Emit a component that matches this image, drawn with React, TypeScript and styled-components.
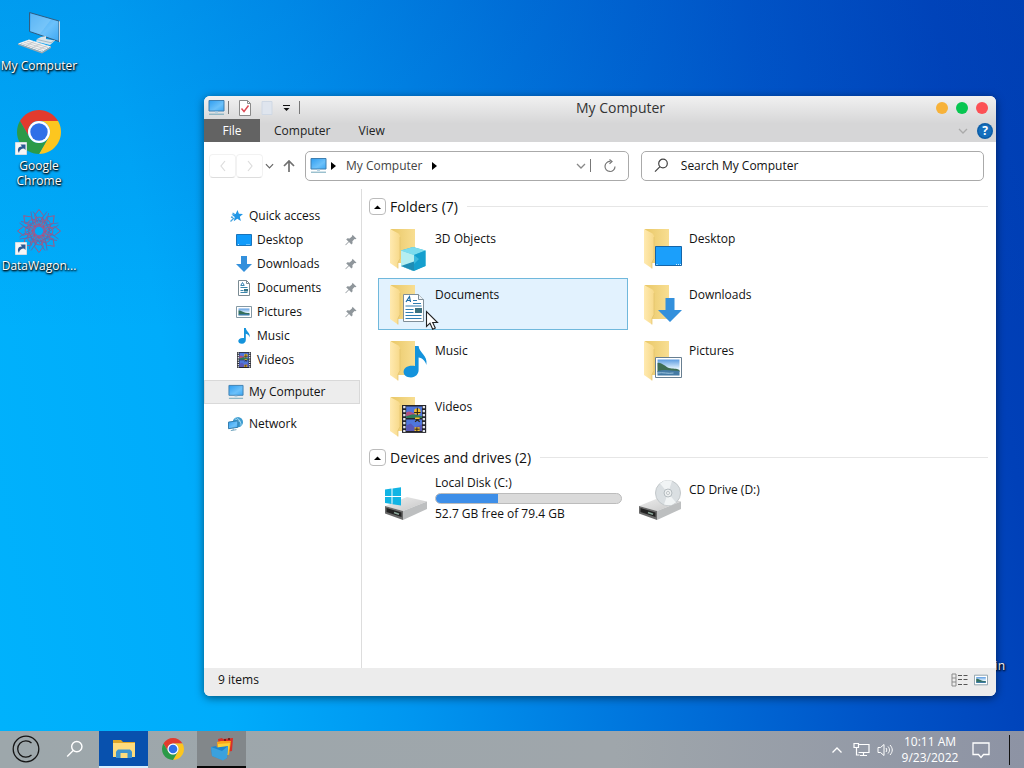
/******************************************************************************/

import { ReactNode } from 'react';
import styled, { createGlobalStyle } from 'styled-components';

/******************************************************************************/

const GlobalStyle = createGlobalStyle`
  * {
    box-sizing: border-box;
  }

  body {
    margin: 0;
    font-family: 'Open Sans', 'Noto Sans', sans-serif;
    font-size: 12px;
    line-height: 16px;
    color: #111;
  }

  button {
    display: flex;
    align-items: center;
    justify-content: center;
    padding: 0;
    border: none;
    background: none;
    color: inherit;
    font: inherit;
  }

  svg {
    display: block;
    flex: none;
  }
`;

/* ---------------------------------- desktop ------------------------------- */

const Screen = styled.div`
  display: flex;
  flex-direction: column;
  height: 100vh;
  overflow: hidden;
`;

const Desktop = styled.main`
  position: relative;
  flex: 1;
  min-height: 0;
  background: linear-gradient(rgba(0, 80, 190, 0.2), rgba(0, 80, 190, 0) 45%),
    linear-gradient(
      80deg,
      #00b2fc 0%,
      #00acfb 20%,
      #0096f0 36%,
      #0074dc 56%,
      #0054c8 76%,
      #0040b8 92%,
      #003cb2 100%
    );
`;

const Shortcuts = styled.div`
  display: flex;
  flex-direction: column;
  width: 78px;
`;

const Shortcut = styled.button`
  && {
    flex-direction: column;
    justify-content: flex-start;
    gap: 2px;
    height: 100px;
    padding: 8px 0 0;
    color: white;
    line-height: 15px;
    text-shadow: 1px 1px 2px black, 0 1px 2px black;
  }
`;

const HiddenShortcut = styled.span`
  position: absolute;
  right: 19px;
  bottom: 57px;
  color: white;
  text-shadow: 1px 1px 2px black, 0 1px 2px black;
`;

/* ---------------------------------- window -------------------------------- */

const Window = styled.section`
  position: absolute;
  top: 96px;
  right: 28px;
  bottom: 35px;
  left: 204px;
  display: flex;
  flex-direction: column;
  overflow: hidden;
  border-radius: 6px;
  background-color: white;
  box-shadow: 0 2px 8px rgba(0, 0, 0, 0.5);
`;

const WindowTop = styled.header`
  background-image: linear-gradient(#f1f1f1, #d6d6d7 60%);
`;

const TitleBar = styled.div`
  display: flex;
  align-items: center;
  height: 23px;
  padding: 0 8px 0 4px;
`;

const Title = styled.h1`
  flex: 1;
  margin: 0;
  color: #333;
  font-size: 14px;
  font-weight: 400;
  line-height: 22px;
  text-align: center;
`;

const Divider = styled.span`
  width: 1px;
  height: 13px;
  margin: 0 5px 0 3px;
  background-color: #777;
`;

const ToolButton = styled.button<{ $width?: number }>`
  && {
    width: ${({ $width }) => $width || 22}px;
    height: 20px;
  }
`;

const WindowControls = styled.div`
  display: flex;
  gap: 8px;
`;

const Control = styled.button<{ $color: string }>`
  && {
    width: 12px;
    height: 12px;
    border-radius: 50%;
    background-color: ${({ $color }) => $color};
  }
`;

const Ribbon = styled.div`
  display: flex;
  align-items: center;
  height: 23px;
  padding-right: 3px;
`;

const RibbonTab = styled.button<{ $active?: boolean }>`
  && {
    height: 23px;
    min-width: ${({ $active }) => ($active ? '56px' : '0')};
    padding: 0 14px;
    background-color: ${({ $active }) => ($active ? '#636363' : 'transparent')};
    color: ${({ $active }) => ($active ? 'white' : '#222')};
  }
`;

const Spacer = styled.span`
  flex: 1;
`;

const AddressRow = styled.div`
  display: flex;
  align-items: center;
  height: 47px;
  padding: 0 12px 0 5px;
`;

const HistoryButton = styled.button`
  && {
    width: 27px;
    height: 24px;
    border: 1px solid #f2f2f2;
    border-bottom-color: #ddd;
    border-radius: 4px;
  }
`;

const AddressBar = styled.div`
  display: flex;
  flex: 326;
  align-items: center;
  height: 30px;
  margin: 0 12px 0 2px;
  padding: 0 4px;
  border: 1px solid #aaa;
  border-radius: 5px;
`;

const Crumb = styled.button`
  && {
    padding: 0 10px 0 7px;
    color: #444;
  }
`;

const SearchBox = styled.label`
  display: flex;
  flex: 342;
  align-items: center;
  gap: 12px;
  height: 30px;
  padding-left: 12px;
  border: 1px solid #aaa;
  border-radius: 5px;
`;

const SearchInput = styled.input`
  flex: 1;
  min-width: 0;
  padding: 0;
  border: none;
  outline: none;
  background: none;
  font: inherit;

  &::placeholder {
    color: #111;
    opacity: 1;
  }
`;

const Body = styled.div`
  display: flex;
  flex: 1;
  min-height: 0;
`;

const Sidebar = styled.nav`
  display: flex;
  flex: none;
  flex-direction: column;
  width: 158px;
  padding: 15px 1px 0 0;
  border-right: 1px solid #ddd;
`;

const NavGroup = styled.div`
  display: flex;
  flex-direction: column;
  margin-bottom: 8px;
`;

const NavItem = styled.button<{ $child?: boolean; $selected?: boolean }>`
  && {
    justify-content: flex-start;
    gap: 5px;
    height: 24px;
    padding: 0 2px 0 ${({ $child }) => ($child ? 31 : 23)}px;
    border: 1px solid ${({ $selected }) => ($selected ? '#d9d9d9' : 'transparent')};
    background-color: ${({ $selected }) => ($selected ? '#ededed' : 'transparent')};
  }
`;

const Content = styled.div`
  flex: 1;
  min-width: 0;
  padding: 2px 8px 0 7px;
  overflow: hidden;
`;

const GroupHeader = styled.div`
  display: flex;
  align-items: center;
  gap: 4px;
  height: 31px;
`;

const Toggle = styled.button`
  && {
    width: 17px;
    height: 17px;
    border: 1px solid #bbb;
    border-radius: 4px;
  }
`;

const GroupTitle = styled.h2`
  margin: 0;
  font-size: 14px;
  font-weight: 400;
  line-height: 20px;
`;

const Rule = styled.span`
  flex: 1;
  height: 1px;
  margin-left: 5px;
  background-color: #e6e6e6;
`;

const Tiles = styled.div`
  display: grid;
  grid-template-columns: repeat(auto-fill, 250px);
  gap: 4px;
  margin-left: 9px;
`;

const Tile = styled.button<{ $selected?: boolean }>`
  && {
    position: relative;
    align-items: flex-start;
    justify-content: flex-start;
    gap: 7px;
    height: 52px;
    padding: 0 5px;
    border: 1px solid ${({ $selected }) => ($selected ? '#70b8dc' : 'transparent')};
    background-color: ${({ $selected }) => ($selected ? '#e2f2fe' : 'transparent')};
    text-align: left;
  }
`;

const TileText = styled.span<{ $top: number }>`
  display: flex;
  flex: 1;
  flex-direction: column;
  padding-top: ${({ $top }) => $top}px;
`;

const Usage = styled.span`
  height: 11px;
  margin: 2px 0;
  overflow: hidden;
  border: 1px solid #bcbcbc;
  border-radius: 6px;
  background-color: #dadada;
`;

const UsageFill = styled.span`
  display: block;
  height: 100%;
  background-color: #3d8ee8;
`;

const Pointer = styled.span`
  position: absolute;
  top: 31px;
  left: 46px;
`;

const StatusBar = styled.footer`
  display: flex;
  align-items: center;
  gap: 3px;
  height: 28px;
  padding: 0 7px 4px 14px;
  background-color: #ececec;
`;

/* ---------------------------------- taskbar ------------------------------- */

const Taskbar = styled.footer`
  display: flex;
  align-items: stretch;
  height: 37px;
  padding-left: 1px;
  background-image: linear-gradient(to right, #9da7ab, #9fa6ab 60%, #8d93a4);
  color: white;
`;

const TaskButton = styled.button<{ $fill?: string; $line?: string }>`
  && {
    width: 49px;
    border-bottom: 2px solid ${({ $line }) => $line || 'transparent'};
    background-color: ${({ $fill }) => $fill || 'transparent'};
    background-clip: padding-box;
  }
`;

const TrayButton = styled.button<{ $width?: number }>`
  && {
    width: ${({ $width }) => $width || 24}px;
  }
`;

const Clock = styled.button`
  && {
    width: 66px;
    text-align: center;
  }
`;

const ShowDesktop = styled.button`
  && {
    width: 15px;
    margin: 4px 0 3px 10px;
    border-left: 1px solid #111;
  }
`;

/* ----------------------------------- icons -------------------------------- */

interface IconProps {
  size?: number;
}

const GradientSheet = styled.svg`
  position: absolute;
  width: 0;
  height: 0;
`;

const Gradients = () => (
  <GradientSheet aria-hidden="true">
    <defs>
      <linearGradient id="glass" x1="0" y1="0" x2="1" y2="1">
        <stop offset="0" stopColor="#2e9df0" />
        <stop offset="0.6" stopColor="#6cc1fa" />
        <stop offset="1" stopColor="#3ba7f3" />
      </linearGradient>
      <linearGradient id="folderBack" x1="0" y1="0" x2="1" y2="0">
        <stop offset="0" stopColor="#e9c868" />
        <stop offset="1" stopColor="#f8de92" />
      </linearGradient>
      <linearGradient id="folderFront" x1="0" y1="0" x2="1" y2="0">
        <stop offset="0" stopColor="#ffeab0" />
        <stop offset="1" stopColor="#f7d98a" />
      </linearGradient>
      <linearGradient id="metal" x1="0" y1="0" x2="1" y2="1">
        <stop offset="0" stopColor="#eeeeee" />
        <stop offset="1" stopColor="#c6c6c6" />
      </linearGradient>
      <linearGradient id="sky" x1="0" y1="0" x2="0" y2="1">
        <stop offset="0" stopColor="#5b9be0" />
        <stop offset="0.6" stopColor="#e8f6ff" />
      </linearGradient>
    </defs>
  </GradientSheet>
);

const MonitorIcon = ({ size = 17 }: IconProps) => (
  <svg width={size} height={size} viewBox="0 0 17 17">
    <path d="M1 1.500h15v10.500H1z" fill="url(#glass)" stroke="#3f7fb0" />
    <path d="M7 12.500h3v1.500H7z" fill="#b6d3e4" />
    <path d="M1 15.200h15" stroke="#6ea4b8" />
  </svg>
);

const BigComputerIcon = () => (
  <svg width="48" height="48" viewBox="0 0 48 48">
    <path d="M14.500 4.500L44 13v20.500L14.500 23.500z" fill="url(#glass)" stroke="#315e82" />
    <path d="M15.500 5.600L36 11.500 25 26 15.500 23z" fill="#8fd0fb" opacity="0.45" />
    <path d="M44 13l1 .5v21l-1-1z" fill="#c9dbe6" />
    <path d="M26 29l5-1v3l9 1.500-5 4.500-14-3.500 1-2.500z" fill="#d9e4ea" />
    <path d="M22 31.500l14 3.200 4-2.500" fill="none" stroke="#a4bac6" />
    <path d="M3 35.500l11-4 22 7-9 5.500z" fill="#f2f2f2" />
    <path d="M3 35.500l24 8.500v1.500L3 36.800zM27 44l9-5.500V40l-9 5.500z" fill="#a3a9ad" />
    <path d="M6 35.300l22 7.300M9 34.200l22 7M12 33.100l21 6.500M11 38l8-4.500M17 40l9-4.500M23 42l9-4.500" stroke="#b9bfc3" strokeWidth="0.7" />
  </svg>
);

const ShortcutArrow = () => (
  <g>
    <path d="M.5 34.500h11v12H.5z" fill="#f6f6f6" stroke="#d5dde3" />
    <path d="M4 45c-2.500-4 0-7 3-6.500l-1.500-2H10.500v5.500l-1.500-1.500c-3 0-4.500 1.500-5 4.500z" fill="#2b5a94" />
  </g>
);

const ChromeMark = () => (
  <g>
    <path d="M4.950 13A22 22 0 0 1 43.050 13H24A11 11 0 0 0 14.470 29.500z" fill="#e23b2e" />
    <path d="M43.050 13A22 22 0 0 1 24 46L33.530 29.500A11 11 0 0 0 24 13z" fill="#fcc61f" />
    <path d="M24 46A22 22 0 0 1 4.950 13L14.470 29.500A11 11 0 0 0 33.530 29.500z" fill="#2b9a48" />
    <circle cx="24" cy="24" r="11" fill="white" />
    <circle cx="24" cy="24" r="8.700" fill="#2e70e8" />
  </g>
);

const ChromeShortcutIcon = () => (
  <svg width="48" height="48" viewBox="0 0 48 48">
    <ChromeMark />
    <ShortcutArrow />
  </svg>
);

const ChromeIcon = () => (
  <svg width="24" height="24" viewBox="0 0 48 48">
    <ChromeMark />
  </svg>
);

const DataWagonIcon = () => (
  <svg width="48" height="48" viewBox="0 0 48 48">
    <g fill="none" stroke="#5f6cae" strokeWidth="1">
      {[0, 45, 90, 135, 180, 225, 270, 315].map((angle) => (
        <g key={angle} transform={`rotate(${angle} 24 23)`}>
          <path d="M24 1.500l4.500 6L24 17l-4.500-9.500z" stroke="#a5577f" />
          <path d="M18 3.500l7 10 7-10M17 11l14 4" />
          <circle cx="24" cy="13" r="4" stroke="#9d5c88" />
          <path d="M24 17l3 2" stroke="#c0476a" strokeWidth="1.500" />
        </g>
      ))}
      <circle cx="24" cy="23" r="5" stroke="#8a62a0" strokeWidth="1.500" />
    </g>
    <ShortcutArrow />
  </svg>
);

const CheckPageIcon = () => (
  <svg width="16" height="16" viewBox="0 0 16 16">
    <path d="M2.500.5h8l3 3v12h-11z" fill="white" stroke="#8a8a8a" />
    <path d="M10.500.5v3h3" fill="none" stroke="#8a8a8a" />
    <path d="M4.500 8.500l2.500 3 4.500-6" fill="none" stroke="#dd4a55" strokeWidth="1.400" />
  </svg>
);

const FadedPageIcon = () => (
  <svg width="16" height="16" viewBox="0 0 16 16">
    <path d="M3 1.500h10v13H3z" fill="#dfe5ee" stroke="#cfd8e4" />
  </svg>
);

const MenuArrowIcon = () => (
  <svg width="10" height="8" viewBox="0 0 10 8">
    <path d="M1 1.500h7" stroke="#111" />
    <path d="M1.500 4h6L4.500 7z" fill="#111" />
  </svg>
);

const ChevronIcon = ({ up, color, width = 10 }: { up?: boolean; color: string; width?: number }) => (
  <svg width={width} height="10" viewBox="0 0 10 10">
    <path d={up ? 'M.5 7.500L5 3l4.500 4.500' : 'M1 3l4 4 4-4'} fill="none" stroke={color} strokeWidth="1.300" />
  </svg>
);

const HistoryIcon = ({ forward }: { forward?: boolean }) => (
  <svg width="12" height="12" viewBox="0 0 12 12">
    <path d={forward ? 'M4 1l4 5-4 5' : 'M8 1L4 6l4 5'} fill="none" stroke="#dcdcdc" strokeWidth="1.200" />
  </svg>
);

const UpIcon = () => (
  <svg width="12" height="14" viewBox="0 0 12 14">
    <path d="M6 13V2M1 7l5-5 5 5" fill="none" stroke="#707070" strokeWidth="1.700" />
  </svg>
);

const CaretIcon = () => (
  <svg width="5" height="8" viewBox="0 0 5 8">
    <path d="M0 0l5 4-5 4z" fill="black" />
  </svg>
);

const RefreshIcon = () => (
  <svg width="14" height="14" viewBox="0 0 14 14">
    <path d="M7.500 2.500A5 5 0 1 0 12 7.500" fill="none" stroke="#777" strokeWidth="1.200" />
    <path d="M6.500.5l2.500 2-2.500 2.300" fill="none" stroke="#777" strokeWidth="1.200" />
  </svg>
);

const MagnifierIcon = ({ color, size = 15 }: { color: string; size?: number }) => (
  <svg width={size} height={size} viewBox="0 0 15 15">
    <circle cx="9" cy="5.500" r="4.300" fill="none" stroke={color} strokeWidth="1.200" />
    <path d="M6 8.700L1 13.700" stroke={color} strokeWidth="1.200" />
  </svg>
);

const HelpIcon = () => (
  <svg width="16" height="16" viewBox="0 0 16 16">
    <circle cx="8" cy="8" r="8" fill="#0d5ea8" />
    <circle cx="8" cy="8" r="6.500" fill="#156fbd" />
    <text x="8" y="12.300" fill="white" fontSize="12" fontWeight="700" textAnchor="middle">
      ?
    </text>
  </svg>
);

const StarIcon = () => (
  <svg width="16" height="16" viewBox="0 0 16 16">
    <path d="M9.500 2l1.400 3.800 4.100.2-3.200 2.700 1.100 4.300-3.600-2.300-3.500 2.500.9-4.100L3.500 6.500l4.100-.4z" fill="#2297e6" />
    <path d="M2.500 13.500l3.500-3.500M4.500 5l2 1M3 9l2 .5" stroke="#4ba5de" strokeWidth="1.300" />
  </svg>
);

const ScreenIcon = () => (
  <svg width="16" height="16" viewBox="0 0 16 16">
    <path d="M.5 2.500h15v11H.5z" fill="#109bfb" stroke="#1974bb" />
    <path d="M2 12.500h1M10.500 12.500h4" stroke="#bfe4ff" strokeDasharray="1 1" />
  </svg>
);

const ArrowShape = () => <path d="M5 0h6v8h5l-8 8-8-8h5z" fill="#3390dc" />;

const DownIcon = () => (
  <svg width="16" height="16" viewBox="0 0 16 16">
    <ArrowShape />
  </svg>
);

const PageIcon = () => (
  <svg width="16" height="16" viewBox="0 0 16 16">
    <path d="M2.500.5h8l3 3v12h-11z" fill="white" stroke="#7b8b93" />
    <path d="M10.500.5v3h3" fill="none" stroke="#7b8b93" />
    <path d="M4.500 5.500h4M4.500 7.500h7M4.500 10.500h3M4.500 12.500h7" stroke="#3d87ad" />
    <path d="M8 9h4v2.500H8z" fill="#347486" />
    <path d="M5 5l1.500-2.500L8 5" fill="none" stroke="#2c7cb0" />
  </svg>
);

const PhotoIcon = ({ size = 16 }: IconProps) => (
  <svg width={size} height={size} viewBox="0 0 16 16">
    <path d="M.5 2.500h15v11H.5z" fill="white" stroke="#8499a5" />
    <path d="M2.500 4.500h11v7h-11z" fill="url(#sky)" />
    <path d="M2.500 6.500c3-.5 4 2.500 11 2.500v1.500h-11z" fill="#356f5c" />
    <path d="M2.500 10h11v1.500h-11z" fill="#3d7ca6" />
  </svg>
);

const NoteShape = () => (
  <path d="M8 0h1.800c.3 3.500 4.700 4.500 3.900 9.500-.5-2.200-2-3.500-3.900-3.800V12c0 2-1.500 3.700-3.800 3.700C3.500 15.700 2.300 14.500 2.300 13c0-2 2-3.500 5.700-3z" fill="#1493dc" />
);

const MusicIcon = () => (
  <svg width="16" height="16" viewBox="0 0 16 16">
    <NoteShape />
  </svg>
);

const FilmShape = () => (
  <g>
    <path d="M0 0h26v30H0z" fill="#24242a" />
    <path d="M2.500 1v28M23.500 1v28" stroke="#dfe3ea" strokeWidth="2.500" strokeDasharray="2.500 1.800" />
    <path d="M4.500 1.500h17v12.500h-17zM4.500 15.500h17v12.500h-17z" fill="#4f76dc" />
    <path d="M4.500 8c5-3 7 2 9 0v4h-9z" fill="#b5507c" />
    <path d="M4.500 12l7-2 10 2v2h-17z" fill="#2f7c59" />
    <path d="M4.500 22l5-2 4 4 8-3v7h-17z" fill="#5a59b8" />
    <circle cx="16.500" cy="7" r="3.500" fill="#efbd2f" />
    <path d="M13 8h7M16.500 3v8M14 18l5-4M14 14l5 4" stroke="#2c2414" strokeWidth="1.200" />
    <path d="M14 13.500h5v1.500h-5zM13.500 24h5.500v4h-5.500z" fill="#efbd2f" />
    <path d="M13.500 26h5.500M16 24v4" stroke="#2c2414" />
  </g>
);

const FilmIcon = () => (
  <svg width="16" height="16" viewBox="-1 0 28 30">
    <FilmShape />
  </svg>
);

const NetworkIcon = () => (
  <svg width="16" height="16" viewBox="0 0 17 17">
    <circle cx="10.500" cy="6.500" r="5.500" fill="#3d9bcf" />
    <path d="M7 3c3 0 3 3 6 2.500M9 1.500c3 2 5 5 5 9" fill="none" stroke="#a9dcf3" />
    <path d="M.5 6.500l10-1.500v7l-10 1.500z" fill="url(#glass)" stroke="#2d77a8" />
    <path d="M3 15.500l6-1M5.500 13v2" stroke="#6fa3bd" />
  </svg>
);

const PinIcon = () => (
  <svg width="12" height="12" viewBox="0 0 12 12">
    <path d="M7.500 0.800L11.500 4.800l-1.300.5-.7-.3-2.100 2.300.2 2-1.200 1.200L4 8.100.8 11.200l-.5-.5 3.200-3.100L1.200 5.400l1.200-1.100 2.200.1L6.900 2.500z" fill="#8f969b" />
  </svg>
);

const ToggleIcon = () => (
  <svg width="7" height="4" viewBox="0 0 9 5">
    <path d="M0 5l4.500-4.500L9 5z" fill="black" />
  </svg>
);

/* A half-open folder; the children are drawn over its lower right corner. */
const FolderIcon = ({ children }: { children: ReactNode }) => (
  <svg width="44" height="50" viewBox="0 0 44 50">
    <path d="M7 6h24v34H12z" fill="url(#folderBack)" />
    <path d="M6 6l8.500 4.500c1 1 1.500 2 1.500 3v22l-2 4v6L6 40z" fill="url(#folderFront)" />
    <path d="M16 14v21.500l-2 4v6" fill="none" stroke="#e3c26c" strokeWidth="0.700" />
    {children}
  </svg>
);

const CubeOverlay = () => (
  <g transform="translate(17 24)">
    <path d="M12 0l12.500 3.500V19L12 24 0 19V3.500z" fill="#35b9d8" />
    <path d="M0 3.500L12 0l12.500 3.500L13 8z" fill="#7bdcee" />
    <path d="M0 3.500L13 8v16L0 19z" fill="#b5eef0" />
    <path d="M13 8l11.500-4.500V19L13 24z" fill="#159fce" />
    <path d="M13 8l5 4-5 5z" fill="#3cb9de" />
    <path d="M0 19l13-4.500V24z" fill="#1f8db5" />
  </g>
);

const ScreenOverlay = () => (
  <g>
    <path d="M17.500 23.500h26v19h-26z" fill="#1b9ffb" stroke="#1565a8" />
    <path d="M18.500 41.500h2M38 41.500h5" stroke="#d5eeff" strokeDasharray="1 1" />
  </g>
);

const PageOverlay = () => (
  <g>
    <path d="M19.500 15.500h15l5 5v22h-20z" fill="white" stroke="#7f8e98" />
    <path d="M34.500 15.500v5h5" fill="#edf3f7" stroke="#7f8e98" />
    <path d="M22 23l3.500-5.500 1 5.500M23 21.500h3.500" fill="none" stroke="#1b6aa5" strokeWidth="1.200" />
    <path d="M29 21.500h4M29 24.500h8M21.500 27h16M21.500 30.500h8M21.500 33.500h8M21.500 36.500h16M21.500 39.500h16" stroke="#2f7eb3" />
    <path d="M31 29h7v5h-7z" fill="#3c7280" />
  </g>
);

const ArrowOverlay = () => (
  <g transform="translate(20 19) scale(1.500)">
    <ArrowShape />
  </g>
);

const NoteOverlay = () => (
  <g transform="translate(15 11) scale(2 2)">
    <NoteShape />
  </g>
);

const PhotoOverlay = () => (
  <g>
    <path d="M17.500 22.500h26v20h-26z" fill="white" stroke="#687f91" />
    <path d="M19.500 24.500h22v16h-22z" fill="url(#sky)" />
    <path d="M19.500 28c4-1 8 4 11.500 5s7.500 0 10.500 2v2h-22z" fill="#3f6d54" />
    <path d="M19.500 36c8-2 14 0 22 0v4.500h-22z" fill="#457ba5" />
    <path d="M19.500 38c6-1 10 1 16 0" stroke="#9fc5df" fill="none" />
  </g>
);

const FilmOverlay = () => (
  <g transform="translate(18 14) scale(.93)">
    <FilmShape />
  </g>
);

const DriveShape = () => (
  <g>
    <path d="M1 32l22-9 20 4.500L19 37z" fill="url(#metal)" />
    <path d="M1 32l18 5v9L1 39.500z" fill="#6a6a6a" />
    <path d="M2.500 34l15 4.500v4.500L2.500 38z" fill="#222" />
    <path d="M10 38.500l5 1.700" stroke="#8ca79a" strokeWidth="1.500" />
    <path d="M19 37l24-9.500v7.500L19 46z" fill="#bdbfc0" />
  </g>
);

const LocalDiskIcon = () => (
  <svg width="44" height="50" viewBox="0 0 44 50">
    <DriveShape />
    <path d="M1 15.500l6.500-1V22H1zM8.500 14.400L17 13.200V22H8.500zM1 23h6.500v7L1 29zM8.500 23H17v8.500l-8.500-1.200z" fill="#11b4e4" />
  </svg>
);

const CdDriveIcon = () => (
  <svg width="44" height="50" viewBox="0 0 44 50">
    <DriveShape />
    <circle cx="30" cy="19" r="12.500" fill="#dadfe2" stroke="#c3c8cb" />
    <path d="M30 19L22 9.500A12.500 12.500 0 0 1 34 7zM30 19l8 9.500a12.500 12.500 0 0 1-12 2z" fill="#f1f4f5" />
    <circle cx="30" cy="19" r="4" fill="#eceff0" stroke="#b5bcc0" />
    <circle cx="30" cy="19" r="1.500" fill="white" stroke="#a5acb0" strokeWidth="0.700" />
  </svg>
);

const PointerIcon = () => (
  <svg width="14" height="21" viewBox="0 0 14 21">
    <path d="M1.500 1.500v15l3.500-3.300 2.700 6 2.600-1.200-2.600-5.500h4.800z" fill="white" stroke="#222" strokeWidth="1.100" />
  </svg>
);

const DetailsIcon = () => (
  <svg width="17" height="14" viewBox="0 0 17 14">
    <path d="M1 1h4v12H1zM1 5h4M1 9h4" fill="none" stroke="#8b8b8b" />
    <path d="M7 2.500h4M7 6.500h4M7 11.500h4M12.500 2.500h4M12.500 6.500h4M12.500 11.500h4" stroke="#555" />
  </svg>
);

const StartIcon = () => (
  <svg width="28" height="28" viewBox="0 0 28 28">
    <circle cx="14" cy="14" r="12.800" fill="none" stroke="#151515" strokeWidth="1.300" />
    <path d="M19.500 8A8.200 8.200 0 1 0 19.500 20" fill="none" stroke="#151515" strokeWidth="1.300" />
  </svg>
);

const ExplorerIcon = () => (
  <svg width="24" height="20" viewBox="0 0 24 20">
    <path d="M1 1h8l2 2h12v14H1z" fill="#dda629" />
    <path d="M1 4h22v14H1z" fill="#fddc7d" />
    <path d="M6 10.500h12l2 2v6.500H4v-6.500z" fill="#3e94cf" />
    <path d="M8.500 14h7v5h-7z" fill="#fddc7d" />
  </svg>
);

const FoldersAppIcon = () => (
  <svg width="26" height="26" viewBox="0 0 26 26">
    <path d="M9 3l4-1 1 1 10-1-1 13-12 2z" fill="#d92f27" />
    <path d="M15 4h2M19 3h2M16 7h2M20 6h2" stroke="#5c1512" strokeWidth="1.500" />
    <path d="M8 6l4-1 10 0-2 14-11-2z" fill="#f9a61c" />
    <path d="M9 8l12-1-2 12-10-1z" fill="#fcd137" />
    <path d="M2 11l5-1 1 1.500L19 10l-1 12-4 2L3 20z" fill="#1e85cc" />
    <path d="M2 11l11 4 6-5-1 12-4 2.500L3 20z" fill="#3ba1dd" />
  </svg>
);

const WiredIcon = () => (
  <svg width="17" height="16" viewBox="0 0 17 16">
    <path d="M6 2.500h10v8H5.500M10.500 10.500v3M7 13.500h7M1 1.500h4.500v4H1zM3.500 5.500v7.500h3" fill="none" stroke="white" strokeWidth="1.200" />
  </svg>
);

const SpeakerIcon = () => (
  <svg width="16" height="14" viewBox="0 0 16 14">
    <path d="M1 4.500h2.500L7 1.500v11L3.500 9.500H1zM9 5c1 1.500 1 2.500 0 4M11 3.500c2 2.500 2 4.500 0 7M13 2c3 3.500 3 6.500 0 10" fill="none" stroke="white" />
  </svg>
);

const ActionCenterIcon = () => (
  <svg width="18" height="18" viewBox="0 0 18 18">
    <path d="M1 2h16v11.500h-5.500L9 16.500l-2.500-3H1z" fill="none" stroke="white" strokeWidth="1.300" />
  </svg>
);

/* ------------------------------------ data -------------------------------- */

const pinned = [
  { name: 'Desktop', icon: <ScreenIcon />, pin: true },
  { name: 'Downloads', icon: <DownIcon />, pin: true },
  { name: 'Documents', icon: <PageIcon />, pin: true },
  { name: 'Pictures', icon: <PhotoIcon />, pin: true },
  { name: 'Music', icon: <MusicIcon />, pin: false },
  { name: 'Videos', icon: <FilmIcon />, pin: false },
];

const folders = [
  { name: '3D Objects', overlay: <CubeOverlay /> },
  { name: 'Desktop', overlay: <ScreenOverlay /> },
  { name: 'Documents', overlay: <PageOverlay />, selected: true },
  { name: 'Downloads', overlay: <ArrowOverlay /> },
  { name: 'Music', overlay: <NoteOverlay /> },
  { name: 'Pictures', overlay: <PhotoOverlay /> },
  { name: 'Videos', overlay: <FilmOverlay /> },
];

const shortcuts = [
  { name: 'My Computer', icon: <BigComputerIcon /> },
  { name: 'Google Chrome', icon: <ChromeShortcutIcon /> },
  { name: 'DataWagon...', icon: <DataWagonIcon /> },
];

const usedShare = (79.4 - 52.7) / 79.4;

/* --------------------------------- components ----------------------------- */

const Group = ({ title, children }: { title: string; children: ReactNode }) => (
  <section>
    <GroupHeader>
      <Toggle aria-label={title}>
        <ToggleIcon />
      </Toggle>
      <GroupTitle>{title}</GroupTitle>
      <Rule />
    </GroupHeader>
    <Tiles>{children}</Tiles>
  </section>
);

const ExplorerWindow = () => (
  <Window>
    <WindowTop>
      <TitleBar>
        <MonitorIcon size={17} />
        <Divider />
        <ToolButton aria-label="Properties">
          <CheckPageIcon />
        </ToolButton>
        <ToolButton aria-label="New folder">
          <FadedPageIcon />
        </ToolButton>
        <ToolButton $width={18} aria-label="Customize toolbar">
          <MenuArrowIcon />
        </ToolButton>
        <Divider />
        <Title>My Computer</Title>
        <WindowControls>
          <Control $color="#f7b239" aria-label="Minimize" />
          <Control $color="#08c651" aria-label="Maximize" />
          <Control $color="#fc5055" aria-label="Close" />
        </WindowControls>
      </TitleBar>
      <Ribbon>
        <RibbonTab $active>File</RibbonTab>
        <RibbonTab>Computer</RibbonTab>
        <RibbonTab>View</RibbonTab>
        <Spacer />
        <ToolButton $width={28} aria-label="Expand ribbon">
          <ChevronIcon color="#aaa" />
        </ToolButton>
        <ToolButton $width={16} aria-label="Help">
          <HelpIcon />
        </ToolButton>
      </Ribbon>
    </WindowTop>

    <AddressRow>
      <HistoryButton aria-label="Back">
        <HistoryIcon />
      </HistoryButton>
      <HistoryButton aria-label="Forward">
        <HistoryIcon forward />
      </HistoryButton>
      <ToolButton $width={12} aria-label="Recent locations">
        <ChevronIcon color="#666" width={9} />
      </ToolButton>
      <ToolButton $width={28} aria-label="Up">
        <UpIcon />
      </ToolButton>
      <AddressBar>
        <MonitorIcon />
        <ToolButton $width={12} aria-label="Locations">
          <CaretIcon />
        </ToolButton>
        <Crumb>My Computer</Crumb>
        <CaretIcon />
        <Spacer />
        <ToolButton $width={12} aria-label="Previous locations">
          <ChevronIcon color="#888" />
        </ToolButton>
        <Divider />
        <ToolButton $width={28} aria-label="Refresh">
          <RefreshIcon />
        </ToolButton>
      </AddressBar>
      <SearchBox>
        <MagnifierIcon color="#444" />
        <SearchInput type="text" placeholder="Search My Computer" aria-label="Search My Computer" />
      </SearchBox>
    </AddressRow>

    <Body>
      <Sidebar>
        <NavGroup>
          <NavItem>
            <StarIcon />
            Quick access
          </NavItem>
          {pinned.map(({ name, icon, pin }) => (
            <NavItem key={name} $child>
              {icon}
              {name}
              <Spacer />
              {pin && <PinIcon />}
            </NavItem>
          ))}
        </NavGroup>
        <NavGroup>
          <NavItem $selected>
            <MonitorIcon size={16} />
            My Computer
          </NavItem>
        </NavGroup>
        <NavGroup>
          <NavItem>
            <NetworkIcon />
            Network
          </NavItem>
        </NavGroup>
      </Sidebar>

      <Content>
        <Group title="Folders (7)">
          {folders.map(({ name, overlay, selected }) => (
            <Tile key={name} $selected={selected}>
              <FolderIcon>{overlay}</FolderIcon>
              <TileText $top={8}>{name}</TileText>
              {selected && (
                <Pointer>
                  <PointerIcon />
                </Pointer>
              )}
            </Tile>
          ))}
        </Group>
        <Group title="Devices and drives (2)">
          <Tile>
            <LocalDiskIcon />
            <TileText $top={1}>
              Local Disk (C:)
              <Usage>
                <UsageFill style={{ width: `${usedShare * 100}%` }} />
              </Usage>
              52.7 GB free of 79.4 GB
            </TileText>
          </Tile>
          <Tile>
            <CdDriveIcon />
            <TileText $top={8}>CD Drive (D:)</TileText>
          </Tile>
        </Group>
      </Content>
    </Body>

    <StatusBar>
      9 items
      <Spacer />
      <ToolButton aria-label="Details view">
        <DetailsIcon />
      </ToolButton>
      <ToolButton $width={16} aria-label="Large icons view">
        <PhotoIcon size={14} />
      </ToolButton>
    </StatusBar>
  </Window>
);

const App = () => {
  return (
    <Screen>
      <GlobalStyle />
      <Gradients />
      <Desktop>
        <Shortcuts>
          {shortcuts.map(({ name, icon }) => (
            <Shortcut key={name}>
              {icon}
              {name}
            </Shortcut>
          ))}
        </Shortcuts>
        <HiddenShortcut>in</HiddenShortcut>
        <ExplorerWindow />
      </Desktop>
      <Taskbar>
        <TaskButton aria-label="Start">
          <StartIcon />
        </TaskButton>
        <TaskButton aria-label="Search">
          <MagnifierIcon color="white" size={18} />
        </TaskButton>
        <TaskButton $fill="#0851ae" $line="#d5efff" aria-label="File Explorer">
          <ExplorerIcon />
        </TaskButton>
        <TaskButton aria-label="Google Chrome">
          <ChromeIcon />
        </TaskButton>
        <TaskButton $fill="#82878a" $line="#080808" aria-label="Folders">
          <FoldersAppIcon />
        </TaskButton>
        <Spacer />
        <TrayButton aria-label="Show hidden icons">
          <ChevronIcon up color="white" width={12} />
        </TrayButton>
        <TrayButton aria-label="Network">
          <WiredIcon />
        </TrayButton>
        <TrayButton aria-label="Volume">
          <SpeakerIcon />
        </TrayButton>
        <Clock>
          10:11 AM
          <br />
          9/23/2022
        </Clock>
        <TrayButton $width={36} aria-label="Notifications">
          <ActionCenterIcon />
        </TrayButton>
        <ShowDesktop aria-label="Show desktop" />
      </Taskbar>
    </Screen>
  );
};

export default App;
